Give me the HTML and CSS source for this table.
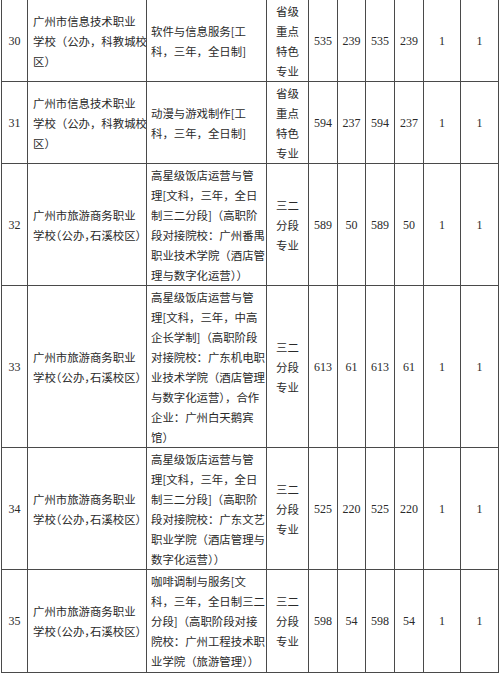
FILE: index.html
```html
<!DOCTYPE html>
<html lang="zh-CN">
<head>
<meta charset="utf-8">
<title>专业表</title>
<link rel="stylesheet" href="styles.css">
</head>
<body>
<table class="sheet">
  <colgroup>
    <col class="c-no"><col class="c-school"><col class="c-major"><col class="c-type">
    <col class="c-n"><col class="c-n2"><col class="c-n"><col class="c-n"><col class="c-one"><col class="c-one2">
  </colgroup>
  <tr class="r82">
    <td class="num">30</td>
    <td class="school">广州市信息技术职业<br>学校（公办，科教城校<br>区）</td>
    <td class="major">软件与信息服务[工<br>科，三年，全日制]</td>
    <td class="type">省级<br>重点<br>特色<br>专业</td>
    <td class="num">535</td><td class="num">239</td><td class="num">535</td><td class="num">239</td><td class="num">1</td><td class="num">1</td>
  </tr>
  <tr class="r82">
    <td class="num">31</td>
    <td class="school">广州市信息技术职业<br>学校（公办，科教城校<br>区）</td>
    <td class="major">动漫与游戏制作[工<br>科，三年，全日制]</td>
    <td class="type">省级<br>重点<br>特色<br>专业</td>
    <td class="num">594</td><td class="num">237</td><td class="num">594</td><td class="num">237</td><td class="num">1</td><td class="num">1</td>
  </tr>
  <tr class="r122">
    <td class="num">32</td>
    <td class="school">广州市旅游商务职业<br>学校<span class="hp">（</span>公办<span class="hp">，</span>石溪校区）</td>
    <td class="major">高星级饭店运营与管<br>理[文科，三年，全日<br>制三二分段]（高职阶<br>段对接院校：广州番禺<br>职业技术学院（酒店管<br>理与数字化运营））</td>
    <td class="type">三二<br>分段<br>专业</td>
    <td class="num">589</td><td class="num">50</td><td class="num">589</td><td class="num">50</td><td class="num">1</td><td class="num">1</td>
  </tr>
  <tr class="r162">
    <td class="num">33</td>
    <td class="school">广州市旅游商务职业<br>学校<span class="hp">（</span>公办<span class="hp">，</span>石溪校区）</td>
    <td class="major">高星级饭店运营与管<br>理[文科，三年，中高<br>企长学制]（高职阶段<br>对接院校：广东机电职<br>业技术学院（酒店管理<br>与数字化运营），合作<br>企业：广州白天鹅宾<br>馆）</td>
    <td class="type">三二<br>分段<br>专业</td>
    <td class="num">613</td><td class="num">61</td><td class="num">613</td><td class="num">61</td><td class="num">1</td><td class="num">1</td>
  </tr>
  <tr class="r122">
    <td class="num">34</td>
    <td class="school">广州市旅游商务职业<br>学校<span class="hp">（</span>公办<span class="hp">，</span>石溪校区）</td>
    <td class="major">高星级饭店运营与管<br>理[文科，三年，全日<br>制三二分段]（高职阶<br>段对接院校：广东文艺<br>职业学院（酒店管理与<br>数字化运营））</td>
    <td class="type">三二<br>分段<br>专业</td>
    <td class="num">525</td><td class="num">220</td><td class="num">525</td><td class="num">220</td><td class="num">1</td><td class="num">1</td>
  </tr>
  <tr class="r103">
    <td class="num">35</td>
    <td class="school">广州市旅游商务职业<br>学校<span class="hp">（</span>公办<span class="hp">，</span>石溪校区）</td>
    <td class="major">咖啡调制与服务[文<br>科，三年，全日制三二<br>分段]（高职阶段对接<br>院校：广州工程技术职<br>业学院（旅游管理））</td>
    <td class="type">三二<br>分段<br>专业</td>
    <td class="num">598</td><td class="num">54</td><td class="num">598</td><td class="num">54</td><td class="num">1</td><td class="num">1</td>
  </tr>
</table>
</body>
</html>
```
FILE: styles.css
```css
html, body {
  margin: 0;
  padding: 0;
  background: #ffffff;
}

.sheet {
  border-collapse: collapse;
  table-layout: fixed;
  width: 497px;
  margin-left: 1px;
  font-family: "Noto Sans CJK SC", "Noto Sans CJK JP", sans-serif;
  font-size: 11.4px;
  line-height: 20px;
  color: #2a2a2a;
}

.c-no { width: 26px; }
.c-school { width: 119px; }
.c-major { width: 120px; }
.c-type { width: 42px; }
.c-n { width: 29px; }
.c-n2 { width: 28px; }
.c-one { width: 37px; }
.c-one2 { width: 38px; }

.sheet td {
  border: 1px solid #4a4a4a;
  padding: 0;
  vertical-align: middle;
  white-space: nowrap;
  overflow: hidden;
}

.sheet tr:first-child td {
  border-top: 0;
}

.r82 td { height: 81px; }
.r122 td { height: 121px; }
.r162 td { height: 161px; }
.r103 td { height: 102px; }

.num {
  text-align: center;
  font-family: "Liberation Serif", "Times New Roman", serif;
  font-size: 12px;
}

.school {
  padding-left: 5px !important;
  text-align: left;
}

.major {
  padding-left: 4px !important;
  text-align: left;
}

.type {
  text-align: center;
}

.hp {
  font-feature-settings: "halt";
}
```
